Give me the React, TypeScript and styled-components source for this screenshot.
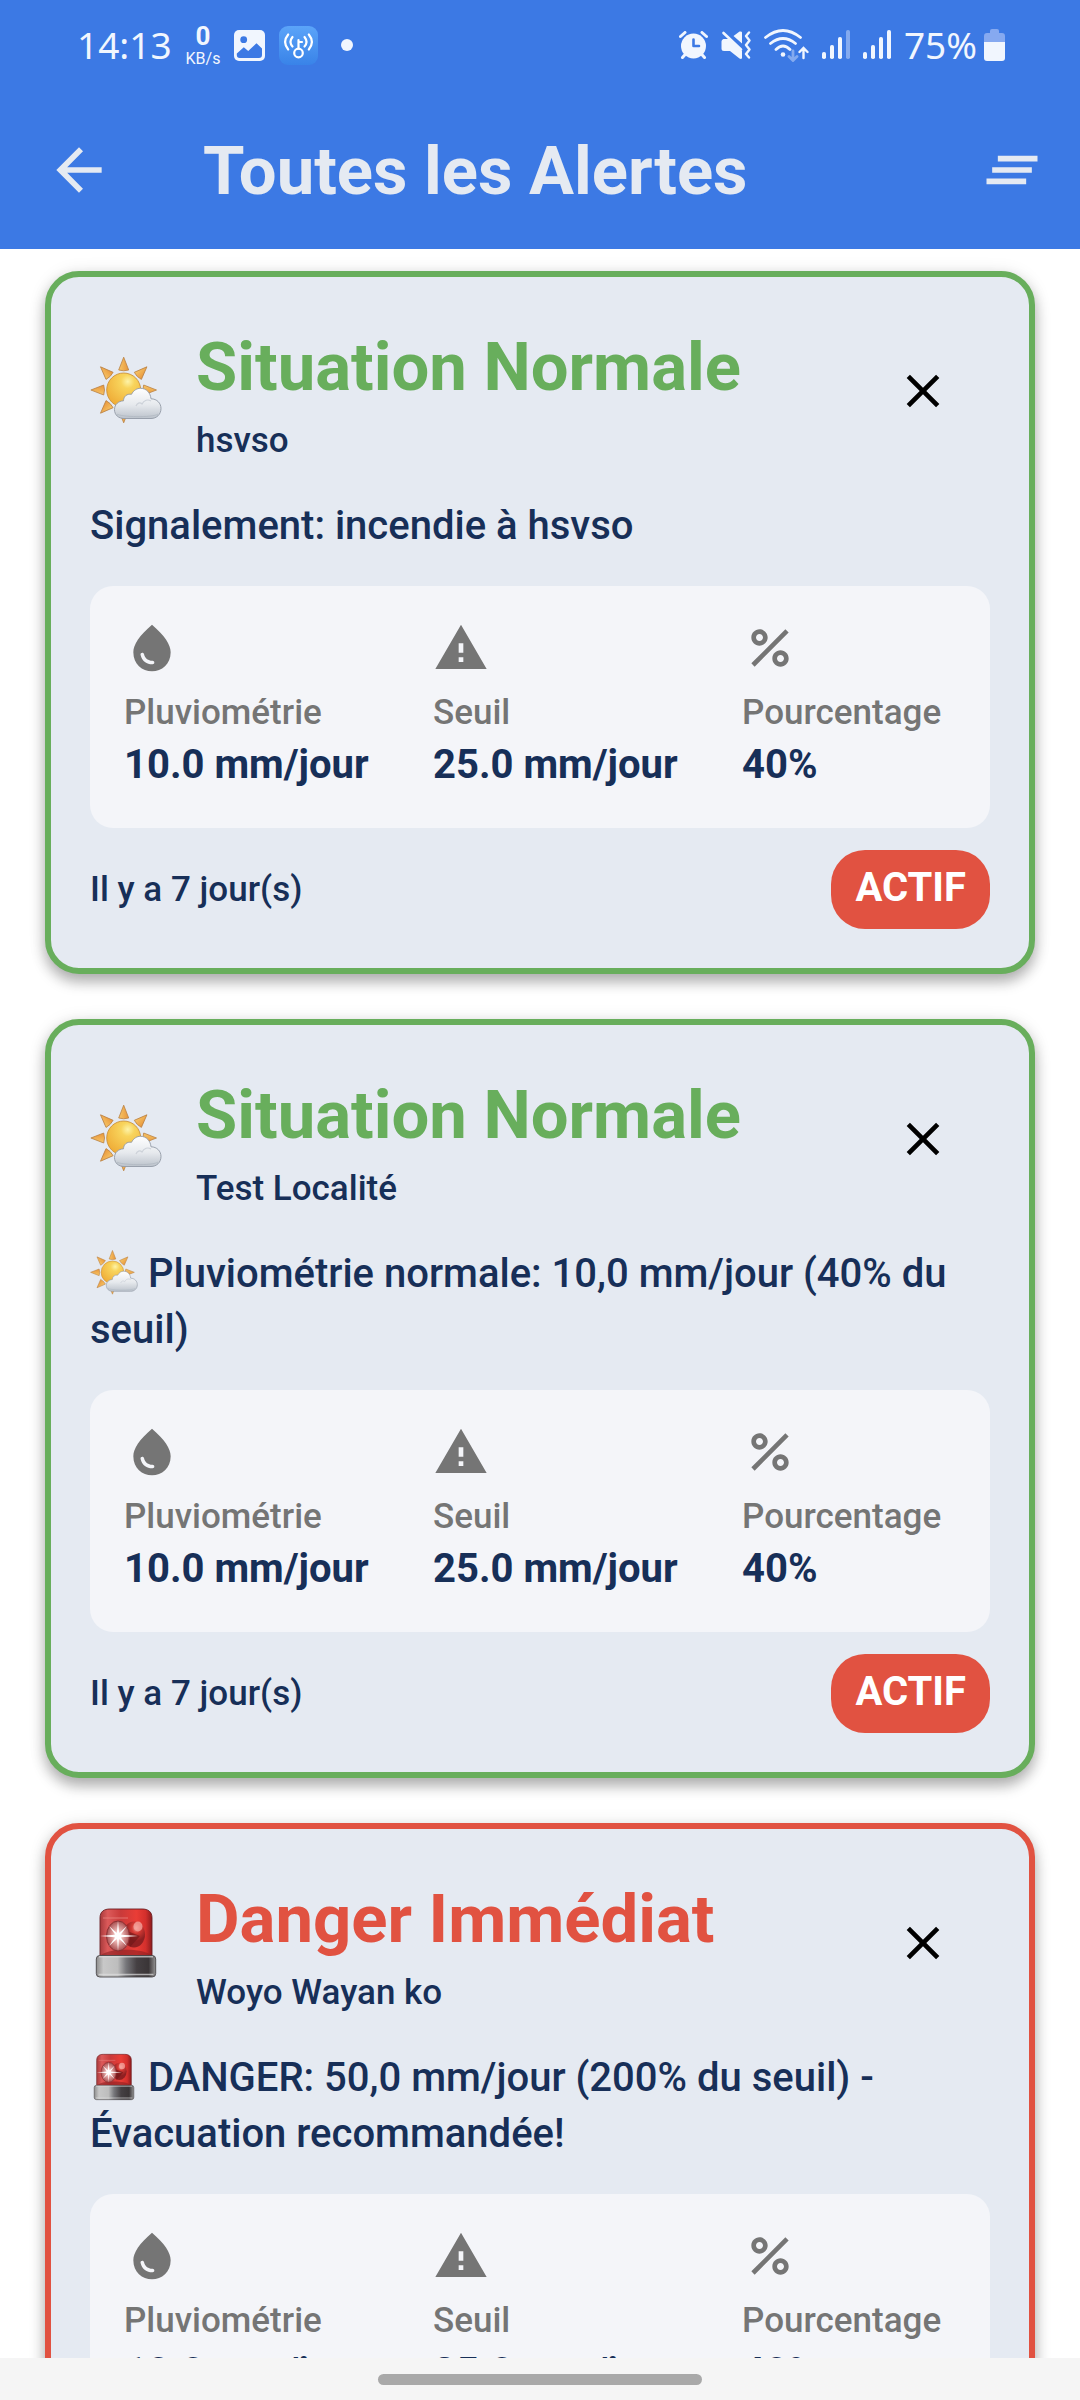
import React, { useId, useState } from "react";
import styled, { createGlobalStyle } from "styled-components";

const colors = {
  blue: "#3c79e4",
  mist: "#e5eaf2",
  panel: "#f4f5f9",
  navy: "#172f58",
  grey: "#757575",
  green: "#68ae5c",
  red: "#e15241",
  status: "#f1f6fe",
};

const GlobalStyle = createGlobalStyle`
  * { box-sizing: border-box; }
  body {
    margin: 0;
    background: #fff;
    font-family: Roboto, "Noto Sans", sans-serif;
    color: ${colors.navy};
  }
  h1, h2, p, dl, dd, dt, ul { margin: 0; padding: 0; }
`;

const Screen = styled.div`
  display: flex;
  flex-direction: column;
  height: 100vh;
  overflow: hidden;
`;

const Top = styled.header`
  flex: none;
  background: ${colors.blue};
`;

const StatusBar = styled.div`
  display: flex;
  justify-content: space-between;
  align-items: center;
  height: 90px;
  padding: 0 75px 0 77px;
  color: ${colors.status};
  font-family: "Noto Sans", sans-serif;
`;

const StatusGroup = styled.div<{ $gap: number }>`
  display: flex;
  align-items: center;
  gap: ${(p) => p.$gap}px;
  svg { display: block; flex: none; }
`;

const StatusText = styled.span`
  font-size: 37px;
  line-height: 40px;
`;

const Speed = styled.span`
  display: flex;
  flex-direction: column;
  align-items: center;
  font-family: Roboto, sans-serif;
  font-size: 16px;
  line-height: 18px;
`;

const SpeedValue = styled.b`
  font-size: 26px;
  line-height: 28px;
`;

const AppBar = styled.div`
  display: flex;
  align-items: center;
  height: 159px;
  padding: 0 34px 0 45px;
`;

const IconButton = styled.button<{ $size: number; $color: string }>`
  display: flex;
  flex: none;
  align-items: center;
  justify-content: center;
  width: ${(p) => p.$size}px;
  height: ${(p) => p.$size}px;
  padding: 0;
  border: 0;
  background: none;
  color: ${(p) => p.$color};
  cursor: pointer;
`;

const PageTitle = styled.h1`
  flex: 1;
  margin-left: 90px;
  padding-top: 2px;
  color: ${colors.mist};
  font-size: 67px;
  font-weight: 700;
  line-height: 80px;
`;

const List = styled.main`
  display: flex;
  flex: 1;
  flex-direction: column;
  gap: 45px;
  min-height: 0;
  padding: 22px 45px;
  overflow-y: auto;
  scrollbar-width: none;
`;

const Card = styled.article<{ $tone: string }>`
  flex: none;
  padding: 39px;
  border: 6px solid ${(p) => p.$tone};
  border-radius: 34px;
  background: ${colors.mist};
  box-shadow: 0 8px 14px rgba(0, 0, 0, 0.28), 0 2px 18px rgba(0, 0, 0, 0.1);
`;

const CardHead = styled.div`
  display: flex;
  align-items: center;
  height: 149px;
  gap: 34px;
`;

const CardNames = styled.div`
  flex: 1;
  padding-top: 2px;
`;

const CardTitle = styled.h2<{ $tone: string }>`
  color: ${(p) => p.$tone};
  font-size: 67px;
  font-weight: 700;
  line-height: 99px;
`;

const Small = styled.p`
  font-size: 35px;
  font-weight: 500;
  line-height: 48px;
`;

const Message = styled.p`
  margin: 33px 0 32px;
  font-size: 40px;
  font-weight: 500;
  line-height: 56px;
`;

const Emoji = styled.svg<{ $size: number }>`
  flex: none;
  width: ${(p) => p.$size}px;
  height: ${(p) => p.$size}px;
  vertical-align: ${(p) => (p.$size < 60 ? "-10px" : "baseline")};
`;

const Stats = styled.dl`
  display: grid;
  grid-template-columns: 13fr 13fr 9fr;
  padding: 34px 34px 35px;
  border-radius: 23px;
  background: ${colors.panel};
`;

const Stat = styled.div`
  svg { display: block; margin-bottom: 13px; color: ${colors.grey}; }
`;

const StatLabel = styled.dt`
  color: ${colors.grey};
  font-size: 35px;
  font-weight: 500;
  line-height: 48px;
`;

const StatValue = styled.dd`
  font-size: 40px;
  font-weight: 700;
  line-height: 56px;
  white-space: nowrap;
`;

const CardFoot = styled.div`
  display: flex;
  align-items: center;
  justify-content: space-between;
  margin-top: 22px;
`;

const Badge = styled.span`
  padding: 10px 24px 13px;
  border-radius: 34px;
  background: ${colors.red};
  color: #fff;
  font-size: 40px;
  font-weight: 700;
  line-height: 56px;
`;

const NavBar = styled.footer`
  display: flex;
  flex: none;
  align-items: center;
  justify-content: center;
  height: 42px;
  background: #f5f5f5;
`;

const Handle = styled.div`
  width: 30%;
  height: 11px;
  border-radius: 6px;
  background: #a9a9a9;
`;

const Glyph = ({ d, size }: { d: string; size: number }) => (
  <svg width={size} height={size} viewBox="0 0 24 24" fill="currentColor" aria-hidden="true">
    <path d={d} />
  </svg>
);

const paths = {
  back: "M20 11H7.83l5.59-5.59L12 4l-8 8 8 8 1.41-1.41L7.83 13H20v-2z",
  clearAll: "M5 13h14v-2H5v2zm-2 4h14v-2H3v2zM7 7v2h14V7H7z",
  close:
    "M19 6.41 17.59 5 12 10.59 6.41 5 5 6.41 10.59 12 5 17.59 6.41 19 12 13.41 17.59 19 19 17.59 13.41 12z",
  drop: "M12 2c-5.33 4.55-8 8.48-8 11.8 0 4.98 3.8 8.2 8 8.2s8-3.22 8-8.2c0-3.32-2.67-7.25-8-11.8zM7.83 14c.37 0 .67.26.74.62.41 2.22 2.28 2.98 3.64 2.87.43-.02.79.32.79.75 0 .4-.32.73-.72.75-2.13.13-4.62-1.09-5.19-4.12-.08-.45.28-.87.74-.87z",
  warning: "M1 21h22L12 2 1 21zm12-3h-2v-2h2v2zm0-4h-2v-4h2v4z",
  percent:
    "M7.5 11C9.43 11 11 9.43 11 7.5S9.43 4 7.5 4 4 5.57 4 7.5 5.57 11 7.5 11zm0-5C8.33 6 9 6.67 9 7.5S8.33 9 7.5 9 6 8.33 6 7.5 6.67 6 7.5 6zM4 18.58 18.59 4 20 5.41 5.42 20zM16.5 13c-1.93 0-3.5 1.57-3.5 3.5s1.57 3.5 3.5 3.5 3.5-1.57 3.5-3.5-1.57-3.5-3.5-3.5zm0 5c-.83 0-1.5-.67-1.5-1.5s.67-1.5 1.5-1.5 1.5.67 1.5 1.5-.67 1.5-1.5 1.5z",
};

const SunCloud = ({ size }: { size: number }) => {
  const id = useId();
  return (
    <Emoji $size={size} viewBox="0 0 72 72" role="img" aria-label="Soleil et nuage">
      <defs>
        <radialGradient id={id + "s"} cx="0.62" cy="0.25" r="0.8">
          <stop offset="0" stopColor="#fdf3a8" />
          <stop offset="0.25" stopColor="#f8d45c" />
          <stop offset="1" stopColor="#efaa35" />
        </radialGradient>
        <linearGradient id={id + "r"} x1="0" y1="0" x2="1" y2="0">
          <stop offset="0" stopColor="#f7c667" />
          <stop offset="1" stopColor="#e8963b" />
        </linearGradient>
        <linearGradient id={id + "c"} x1="0" y1="0" x2="0" y2="1">
          <stop offset="0" stopColor="#ffffff" />
          <stop offset="0.55" stopColor="#e6e9ed" />
          <stop offset="1" stopColor="#bcc3cc" />
        </linearGradient>
      </defs>
      {[0, 45, 90, 135, 180, 225, 270, 315].map((a) => (
        <path
          key={a}
          d="M33.7 2.2 L38.7 15 Q33.7 16.6 28.7 15 Z"
          transform={`rotate(${a} 33.7 35)`}
          fill={`url(#${id}r)`}
          stroke="#b98042"
          strokeWidth="0.8"
          strokeLinejoin="round"
        />
      ))}
      <circle cx="33.7" cy="35" r="17" fill={`url(#${id}s)`} stroke="#c78a35" strokeWidth="0.8" />
      <path
        d="M34 63.5C28.5 63.5 24.5 60 24.5 54.5 24.5 49.5 28.5 46 33.5 45.8 33.5 41.5 37 38.5 41.5 39.3 43.5 35.3 47 33.3 50.5 33.3 56.5 33.3 60.5 38 61 43.8 67 43.8 71 48.3 71 53.5 71 59.5 66.5 63.5 61 63.5Z"
        fill={`url(#${id}c)`}
        stroke="#929aa6"
        strokeWidth="0.9"
      />
      <path d="M46 51c1-3 4-4 6-2 2-4 6-5 9-3" fill="none" stroke="#cdd2d9" strokeWidth="1.2" />
      <path d="M27 59c3 3 36 4 41 0" fill="none" stroke="#aab2bd" strokeWidth="1" opacity="0.6" />
    </Emoji>
  );
};

const Siren = ({ size }: { size: number }) => {
  const id = useId();
  return (
    <Emoji $size={size} viewBox="0 0 72 72" role="img" aria-label="Gyrophare">
      <defs>
        <linearGradient id={id + "d"}>
          <stop offset="0" stopColor="#a83a3c" />
          <stop offset="0.15" stopColor="#dc5a5a" />
          <stop offset="0.4" stopColor="#c93a3a" />
          <stop offset="0.7" stopColor="#ea3d36" />
          <stop offset="0.88" stopColor="#d32f2c" />
          <stop offset="1" stopColor="#8c1c1e" />
        </linearGradient>
        <linearGradient id={id + "b"}>
          <stop offset="0" stopColor="#8d8d8d" />
          <stop offset="0.12" stopColor="#c8c8c8" />
          <stop offset="0.36" stopColor="#bdbdbd" />
          <stop offset="0.5" stopColor="#77777b" />
          <stop offset="0.68" stopColor="#454043" />
          <stop offset="0.88" stopColor="#3a3537" />
          <stop offset="1" stopColor="#949494" />
        </linearGradient>
        <radialGradient id={id + "l"}>
          <stop offset="0" stopColor="#ffffff" />
          <stop offset="0.3" stopColor="#f4c3c0" />
          <stop offset="1" stopColor="#a94f50" />
        </radialGradient>
        <radialGradient id={id + "k"} cx="0.6" cy="0.25">
          <stop offset="0" stopColor="#f39a92" />
          <stop offset="0.4" stopColor="#d53a34" />
          <stop offset="1" stopColor="#8f2022" />
        </radialGradient>
      </defs>
      <path
        d="M10 49V11C10 4.500 14 2 20 2H52C58 2 62 4.500 62 11V49Z"
        fill={`url(#${id}d)`}
        stroke="#6b2024"
        strokeWidth="0.9"
      />
      <path d="M11 48C20 41 52 41 61 48V49H11Z" fill="#8d2022" opacity="0.6" />
      <path d="M13 11H38" stroke="#ef8d88" strokeWidth="1" opacity="0.7" />
      <ellipse cx="44" cy="27.500" rx="11" ry="13" fill={`url(#${id}k)`} />
      <path d="M37 24l13 5-10 11z" fill="#6f1719" opacity="0.65" />
      <ellipse cx="48" cy="19.500" rx="4.500" ry="5" fill="#f6aaa3" opacity="0.75" />
      <ellipse cx="28" cy="29" rx="11.500" ry="15" fill={`url(#${id}l)`} stroke="#8a2e31" strokeWidth="1" />
      <g fill="#fff">
        <path d="M28 14l1.300 13.500L28 44l-1.300-16.500z" />
        <path d="M10 29l18-1.400L48 29l-20 1.400z" />
        <path d="M19 19l10 9 8 11-10-9z" />
        <path d="M37 19l-8 11-10 9 8-11z" />
        <circle cx="28" cy="29" r="3.500" />
      </g>
      <rect x="6.300" y="48.500" width="59.400" height="21.500" rx="3.500" fill={`url(#${id}b)`} stroke="#4b4749" strokeWidth="0.9" />
      <path d="M9 49.800H63M8.500 67.500H63.500" stroke="#dedede" strokeWidth="1.400" opacity="0.7" />
    </Emoji>
  );
};

const PictureIcon = () => (
  <svg width="31" height="31" viewBox="0 0 31 31" aria-hidden="true">
    <rect width="31" height="31" rx="5" fill={colors.status} />
    <circle cx="9.700" cy="9.700" r="3.400" fill={colors.blue} />
    <path d="M2.800 23.500 9.800 17.300 14.200 21 22.500 13.300 28 18.500V25a3 3 0 0 1-3 3H5.800a3 3 0 0 1-3-3z" fill={colors.blue} />
  </svg>
);

const HotspotIcon = () => (
  <svg width="39" height="39" viewBox="0 0 39 39" aria-hidden="true">
    <defs>
      <linearGradient id="hotspot" x1="0" y1="0" x2="0" y2="1">
        <stop offset="0" stopColor="#5ba4f9" />
        <stop offset="1" stopColor="#3983e8" />
      </linearGradient>
    </defs>
    <rect width="39" height="39" rx="9" fill="url(#hotspot)" />
    <g fill="none" stroke="#fff" strokeWidth="2.200" strokeLinecap="round">
      <path d="M9.200 8.500Q3 16 9.200 23.500M13.500 11Q9.500 16 13.500 20.500M29.800 8.500Q36 16 29.800 23.500M25.500 11Q29.500 16 25.500 20.500" />
      <circle cx="19.500" cy="27" r="4.300" />
      <path d="M19.500 22.500V14M19.500 16H23" />
    </g>
  </svg>
);

const AlarmIcon = () => (
  <svg width="29" height="28" viewBox="0 0 29 28" fill="none" stroke={colors.status} strokeLinecap="round" aria-hidden="true">
    <circle cx="14.500" cy="15" r="12.500" fill={colors.status} stroke="none" />
    <path d="M1.500 5.500 6 1.500M27.500 5.500 23 1.500M3.500 26.500 7 22.500M25.500 26.500 22 22.500" strokeWidth="3" />
    <path d="M14.500 8.500V15H20" stroke={colors.blue} strokeWidth="2.600" strokeLinejoin="round" />
  </svg>
);

const MuteIcon = () => (
  <svg width="30" height="28" viewBox="0 0 30 28" fill={colors.status} aria-hidden="true">
    <path d="M12.500 5 18.500.5Q21 0 21 1.500V12.500ZM.5 10.500Q.5 8.500 2.500 8H8L21 20V27Q20.500 28.500 18.500 27.500L9 20H3Q.5 20 .5 17.500Z" />
    <path d="M2.500 2 20 18.500" stroke={colors.status} strokeWidth="2.600" strokeLinecap="round" />
    <path d="M28 1.500 25 5 28.500 9.500 25 14 28.500 18.500 25 23 28 26.500" fill="none" stroke={colors.status} strokeWidth="2.400" strokeLinecap="round" strokeLinejoin="round" />
  </svg>
);

const WifiIcon = () => (
  <svg width="45" height="33" viewBox="0 0 45 33" fill="none" stroke={colors.status} strokeWidth="2.800" strokeLinecap="round" aria-hidden="true">
    <path d="M1.500 8.500Q19 -5.500 36.500 8.500M6.500 14.500Q19 4.500 31.500 14.500M12 20.500Q19 13.500 26 20.500" />
    <circle cx="19" cy="25.500" r="2.300" fill={colors.status} stroke="none" />
    <path d="M29 22V31M25 27.500 29 31.500 33 27.500" opacity="0.4" />
    <path d="M39.500 29V19.500M35.500 23 39.500 19 43.500 23" strokeWidth="2.400" />
  </svg>
);

const SignalIcon = ({ full }: { full?: boolean }) => (
  <svg width="28" height="30" viewBox="0 0 28 30" fill={colors.status} aria-hidden="true">
    <rect x="0" y="22" width="4" height="7" rx="1.800" />
    <rect x="8" y="15" width="4" height="14" rx="1.800" />
    <rect x="16" y="7" width="4" height="22" rx="1.800" />
    <rect x="24" y="0" width="4" height="29" rx="1.800" opacity={full ? 1 : 0.4} />
  </svg>
);

const BatteryIcon = () => (
  <svg width="21" height="32" viewBox="0 0 21 32" aria-hidden="true">
    <path d="M6 4V2Q6 0 8 0H13Q15 0 15 2V4H18Q21 4 21 7V13H0V7Q0 4 3 4Z" fill="#86a9f0" />
    <path d="M0 13H21V29Q21 32 18 32H3Q0 32 0 29Z" fill={colors.status} />
  </svg>
);

const DotIcon = () => (
  <svg width="30" height="12" viewBox="0 0 30 12" aria-hidden="true">
    <circle cx="15" cy="6" r="6" fill={colors.status} />
  </svg>
);

type Alert = {
  id: number;
  level: "normal" | "danger";
  place: string;
  message: string;
  withIcon: boolean;
};

const levels = {
  normal: { title: "Situation Normale", tone: colors.green, Icon: SunCloud },
  danger: { title: "Danger Immédiat", tone: colors.red, Icon: Siren },
};

const initialAlerts: Alert[] = [
  { id: 1, level: "normal", place: "hsvso", message: "Signalement: incendie à hsvso", withIcon: false },
  { id: 2, level: "normal", place: "Test Localité", message: "Pluviométrie normale: 10,0 mm/jour (40% du seuil)", withIcon: true },
  { id: 3, level: "danger", place: "Woyo Wayan ko", message: "DANGER: 50,0 mm/jour (200% du seuil) - Évacuation recommandée!", withIcon: true },
];

const stats = [
  { label: "Pluviométrie", value: "10.0 mm/jour", icon: paths.drop },
  { label: "Seuil", value: "25.0 mm/jour", icon: paths.warning },
  { label: "Pourcentage", value: "40%", icon: paths.percent },
];

const AlertCard = ({ alert, onClose }: { alert: Alert; onClose: () => void }) => {
  const { title, tone, Icon } = levels[alert.level];
  return (
    <Card $tone={tone}>
      <CardHead>
        <Icon size={72} />
        <CardNames>
          <CardTitle $tone={tone}>{title}</CardTitle>
          <Small>{alert.place}</Small>
        </CardNames>
        <IconButton $size={135} $color="#000" aria-label="Fermer" onClick={onClose}>
          <Glyph d={paths.close} size={56} />
        </IconButton>
      </CardHead>
      <Message>
        {alert.withIcon && <><Icon size={48} />{" "}</>}
        {alert.message}
      </Message>
      <Stats>
        {stats.map((s) => (
          <Stat key={s.label}>
            <Glyph d={s.icon} size={56} />
            <StatLabel>{s.label}</StatLabel>
            <StatValue>{s.value}</StatValue>
          </Stat>
        ))}
      </Stats>
      <CardFoot>
        <Small>Il y a 7 jour(s)</Small>
        <Badge>ACTIF</Badge>
      </CardFoot>
    </Card>
  );
};

export default function App() {
  const [alerts, setAlerts] = useState(initialAlerts);
  return (
    <Screen>
      <GlobalStyle />
      <Top>
        <StatusBar>
          <StatusGroup $gap={14}>
            <StatusText>14:13</StatusText>
            <Speed>
              <SpeedValue>0</SpeedValue>
              <span>KB/s</span>
            </Speed>
            <PictureIcon />
            <HotspotIcon />
            <DotIcon />
          </StatusGroup>
          <StatusGroup $gap={13}>
            <AlarmIcon />
            <MuteIcon />
            <WifiIcon />
            <SignalIcon />
            <SignalIcon full />
            <StatusGroup $gap={7}>
              <StatusText>75%</StatusText>
              <BatteryIcon />
            </StatusGroup>
          </StatusGroup>
        </StatusBar>
        <AppBar>
          <IconButton $size={68} $color={colors.mist} aria-label="Retour">
            <Glyph d={paths.back} size={68} />
          </IconButton>
          <PageTitle>Toutes les Alertes</PageTitle>
          <IconButton $size={68} $color={colors.mist} aria-label="Tout effacer" onClick={() => setAlerts([])}>
            <Glyph d={paths.clearAll} size={68} />
          </IconButton>
        </AppBar>
      </Top>
      <List>
        {alerts.map((a) => (
          <AlertCard key={a.id} alert={a} onClose={() => setAlerts(alerts.filter((x) => x.id !== a.id))} />
        ))}
      </List>
      <NavBar>
        <Handle />
      </NavBar>
    </Screen>
  );
}
